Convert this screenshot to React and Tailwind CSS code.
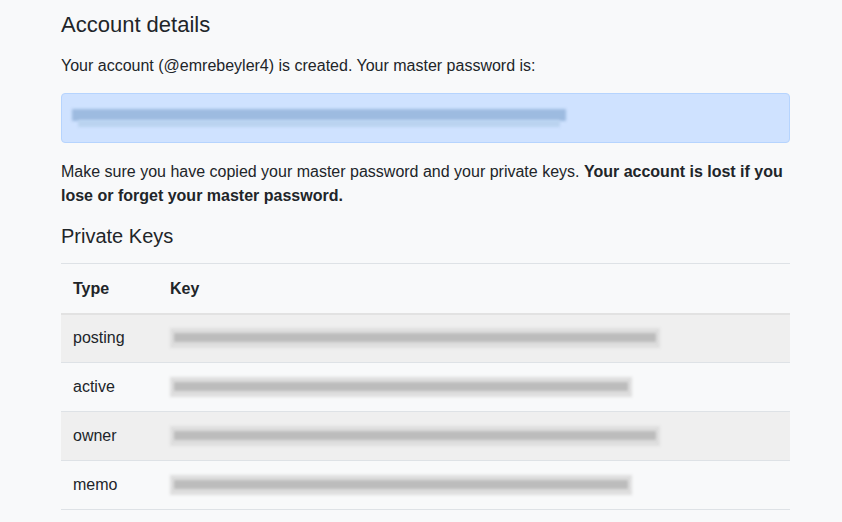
import React from 'react';

const rows = [
  { type: 'posting', w: 490, striped: true },
  { type: 'active', w: 462, striped: false },
  { type: 'owner', w: 490, striped: true },
  { type: 'memo', w: 462, striped: false },
];

function BlurKey({ width }) {
  return (
    <div className="relative h-[24px]" style={{ width }}>
      <div className="absolute inset-x-0 top-[2px] h-[20px] bg-[#dedede] blur-[1.5px]" />
      <div className="absolute inset-x-[4px] top-[7px] h-[9px] bg-[#bcbcbc] blur-[1.5px]" />
    </div>
  );
}

export default function App() {
  return (
    <div className="min-h-[522px] w-full bg-[#f8f9fa] text-[#212529] font-['Liberation_Sans',Arial,sans-serif]">
      <div className="w-[729px] ml-[61px] pt-[11px]">
        <h4 className="text-[22px] leading-[28px] font-normal mb-[15px]">Account details</h4>
        <p className="text-[16px] leading-[24px] mb-[15px]">
          Your account (@emrebeyler4) is created. Your master password is:
        </p>
        <div className="h-[50px] rounded-[4px] border border-[#b6d4fe] bg-[#cfe2ff] flex items-center px-[10px]">
          <div className="relative h-[22px] w-[494px]">
            <div className="absolute inset-x-0 top-[2px] h-[12px] bg-[#9dbbe0] blur-[1.5px]" />
            <div className="absolute inset-x-[6px] top-[13px] h-[7px] bg-[#bad3f0] blur-[1.5px]" />
          </div>
        </div>
        <p className="text-[16px] leading-[24px] mt-[17px]">
          Make sure you have copied your master password and your private keys.{' '}
          <b className="font-bold">Your account is lost if you lose or forget your master password.</b>
        </p>
        <h5 className="text-[20px] leading-[24px] mt-[16px] mb-[15px]">Private Keys</h5>
        <table className="w-full border-collapse text-[16px]">
          <thead>
            <tr className="border-t border-[#dee2e6] border-b-2 border-b-[#e2e2e2]">
              <th className="text-left font-bold w-[97px] pl-[12px] h-[50px] pt-[2px]">Type</th>
              <th className="text-left font-bold pl-[12px] pt-[2px]">Key</th>
            </tr>
          </thead>
          <tbody>
            {rows.map((r) => (
              <tr key={r.type} className={`border-b border-[#dee2e6] h-[49px] ${r.striped ? 'bg-[#efefef]' : ''}`}>
                <td className="pl-[12px]">{r.type}</td>
                <td className="pl-[12px]">
                  <BlurKey width={r.w} />
                </td>
              </tr>
            ))}
          </tbody>
        </table>
      </div>
    </div>
  );
}
